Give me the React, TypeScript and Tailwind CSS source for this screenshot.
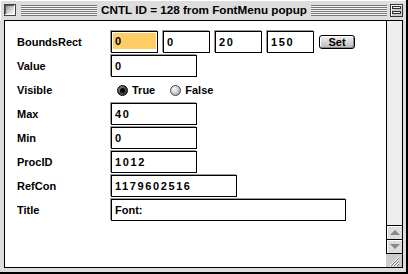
export default function App() {
  function Campo({ w, valor, sel, num }: { w: string; valor: string; sel?: boolean; num?: boolean }) {
    return (
      <div className={`${w} h-[22px] border border-black bg-white flex items-center shadow-[-1px_-1px_0_#999,1px_1px_0_#fff] text-[11px] font-bold text-black`}>
        {sel ? (
          <div className="mx-px mt-[-2px] h-[16px] w-full bg-[#ffcc66] flex items-center px-[2px]">
            <span className={num ? "tracking-[1.6px]" : ""}>{valor}</span>
          </div>
        ) : (
          <span className={`px-[3px] ${num ? "tracking-[1.6px]" : ""}`}>{valor}</span>
        )}
      </div>
    )
  }

  function Radio({ on }: { on?: boolean }) {
    return on ? (
      <div className="w-[11px] h-[11px] rounded-full border border-black bg-[radial-gradient(circle_at_35%_35%,#888_0%,#444_60%,#222_100%)] flex items-center justify-center">
        <div className="w-[5px] h-[5px] rounded-full bg-black"></div>
      </div>
    ) : (
      <div className="w-[11px] h-[11px] rounded-full border border-[#444] bg-[radial-gradient(circle_at_35%_35%,#fff_0%,#ccc_50%,#888_100%)]"></div>
    )
  }

  function Linha({ label, children }: { label: string; children: any }) {
    return (
      <div className="flex items-center h-[24px]">
        <div className="w-[94px] text-[11px] font-bold">{label}</div>
        {children}
      </div>
    )
  }

  const listras = "bg-[repeating-linear-gradient(to_bottom,#777_0px,#777_1px,#f4f4f4_1px,#f4f4f4_2px)]"

  return (
    <div className="w-[408px] h-[274px] bg-[#dddddd] border-r-2 border-b-2 border-black flex flex-col font-['Liberation_Sans',Arial,sans-serif] text-black overflow-hidden">
      {/* barra de titulo */}
      <div className="h-[20px] flex items-center pl-[4px] pr-[3px] shadow-[inset_1px_1px_0_#fff]">
        <div className="w-[12px] h-[12px] border border-[#444] bg-[linear-gradient(135deg,#888_0%,#ddd_60%,#fff_100%)] shadow-[inset_-1px_-1px_0_#fff,inset_1px_1px_0_#555]"></div>
        <div className={`ml-[5px] flex-1 h-[11px] mt-px ${listras}`}></div>
        <div className="px-[4px] text-[11.7px] font-bold leading-none whitespace-nowrap">CNTL ID = 128 from FontMenu popup</div>
        <div className={`flex-1 h-[11px] mt-px ${listras}`}></div>
        <div className="ml-[3px] w-[13px] h-[13px] border border-[#333] bg-[#ccc] flex flex-col justify-center gap-[2px] px-px shadow-[inset_1px_1px_0_#fff]">
          <div className="h-[3px] border border-[#333] bg-[#eee]"></div>
          <div className="h-[3px] border border-[#333] bg-[#eee]"></div>
        </div>
      </div>

      {/* conteudo */}
      <div className="ml-[4px] mr-[3px] h-[248px] border border-black bg-white flex">
        <div className="flex-1 pl-[12px] pt-[9px]">
          <Linha label="BoundsRect">
            <div className="flex items-center gap-[5px]">
              <Campo w="w-[47px]" valor="0" sel num />
              <Campo w="w-[47px]" valor="0" num />
              <Campo w="w-[47px]" valor="20" num />
              <Campo w="w-[47px]" valor="150" num />
              <div className="w-[36px] h-[14px] rounded-[3px] border border-black bg-[linear-gradient(to_bottom,#f2f2f2,#bbbbbb)] shadow-[inset_1px_1px_0_#fff,inset_-1px_-1px_0_#888] flex items-center justify-center text-[11px] font-bold leading-none">
                Set
              </div>
            </div>
          </Linha>
          <Linha label="Value">
            <Campo w="w-[86px]" valor="0" num />
          </Linha>
          <Linha label="Visible">
            <div className="flex items-center pl-[6px] text-[11px] font-bold">
              <Radio on />
              <span className="ml-[4px]">True</span>
              <div className="ml-[15px]"><Radio /></div>
              <span className="ml-[4px]">False</span>
            </div>
          </Linha>
          <Linha label="Max">
            <Campo w="w-[86px]" valor="40" num />
          </Linha>
          <Linha label="Min">
            <Campo w="w-[86px]" valor="0" num />
          </Linha>
          <Linha label="ProcID">
            <Campo w="w-[86px]" valor="1012" num />
          </Linha>
          <Linha label="RefCon">
            <Campo w="w-[126px]" valor="1179602516" num />
          </Linha>
          <Linha label="Title">
            <Campo w="w-[235px]" valor="Font:" />
          </Linha>
        </div>

        {/* barra de rolagem */}
        <div className="w-[16px] flex flex-col">
          <div className="flex-1 border-l border-black bg-[#eeeeee]"></div>
          <div className="h-[14px] border-l border-t border-black bg-[#dddddd] flex items-center justify-center shadow-[inset_1px_1px_0_#fff]">
            <div className="w-0 h-0 border-l-[5px] border-r-[5px] border-b-[5px] border-l-transparent border-r-transparent border-b-[#888]"></div>
          </div>
          <div className="h-[14px] border-l border-t border-black bg-[#dddddd] flex items-center justify-center shadow-[inset_1px_1px_0_#fff]">
            <div className="w-0 h-0 border-l-[5px] border-r-[5px] border-t-[5px] border-l-transparent border-r-transparent border-t-[#888]"></div>
          </div>
          <div className="h-[14px] border-t border-black bg-[#cccccc] flex items-center justify-center">
            <svg width="12" height="12" viewBox="0 0 12 12">
              <path d="M11 2 L2 11 M11 5 L5 11 M11 8 L8 11" stroke="#fff" strokeWidth="1" />
              <path d="M11 3 L3 11 M11 6 L6 11 M11 9 L9 11" stroke="#777" strokeWidth="1" />
            </svg>
          </div>
        </div>
      </div>
    </div>
  )
}
